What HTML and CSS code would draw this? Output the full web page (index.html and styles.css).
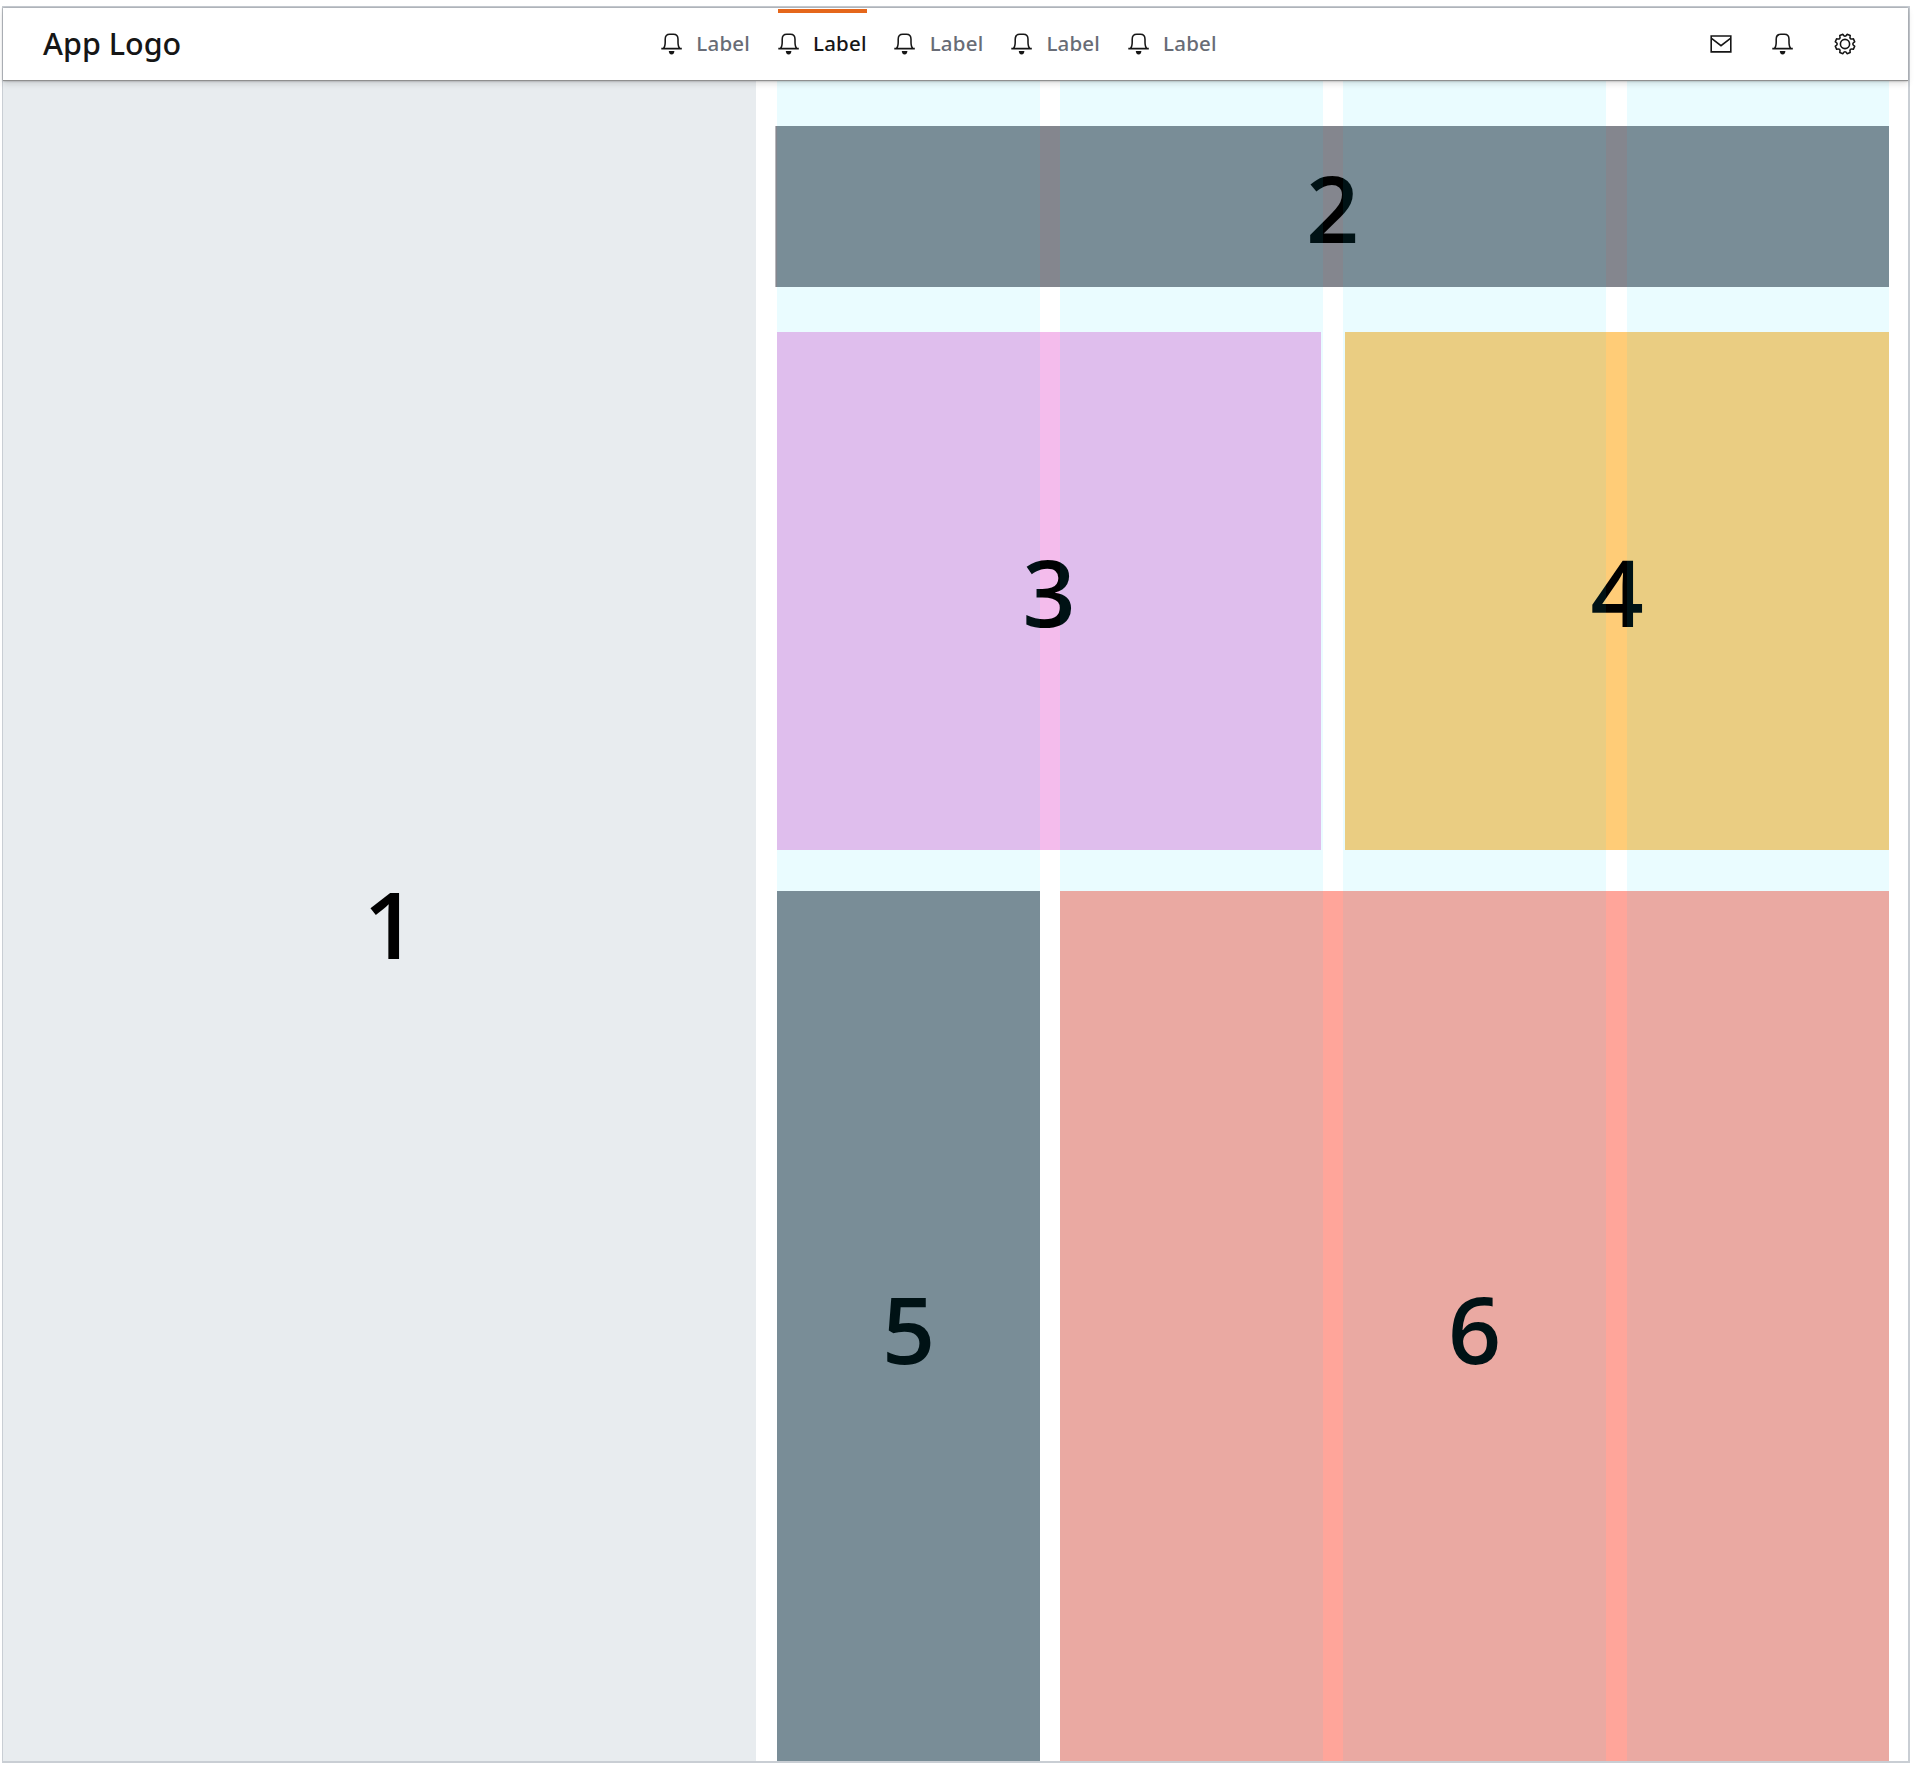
FILE: index.html
```html
<!DOCTYPE html>
<html lang="en">
<head>
<meta charset="utf-8">
<title>App layout</title>
<link rel="stylesheet" href="styles.css">
</head>
<body>
<svg class="sprite" aria-hidden="true">
  <symbol id="bell" viewBox="0 0 22 22">
    <path d="M.3 15.6H20.8M2.5 15.3C3.9 14 4.2 12.2 4.2 9V6.2C4.2 2.8 5.8 1.3 8.8 1.3H12.4C15.4 1.3 17 2.8 17 6.2V9C17 12.2 17.3 14 18.7 15.3" fill="none" stroke="currentColor" stroke-width="1.55"/>
    <path d="M7.8 18H13.4C13.4 20 12.4 21.4 10.6 21.4S7.8 20 7.8 18Z" fill="currentColor"/>
  </symbol>
  <symbol id="mail" viewBox="0 0 22 22">
    <path d="M1.2 3H20.8V18.9H1.2ZM1.2 5.2L11 12.7L20.8 5.2" fill="none" stroke="currentColor" stroke-width="1.6"/>
  </symbol>
  <symbol id="gear" viewBox="0 0 22 22">
    <g fill="none" stroke="currentColor" stroke-width="1.6" stroke-linejoin="round">
      <circle cx="11" cy="11" r="4.6"/>
      <path d="M13.1 1.3L16.2 2.6Q15 7 19.4 5.8L20.7 8.9Q16.9 11 20.7 13.1L19.4 16.2Q15 15 16.2 19.4L13.1 20.7Q11 16.9 8.9 20.7L5.8 19.4Q7 15 2.6 16.2L1.3 13.1Q5.1 11 1.3 8.9L2.6 5.8Q7 7 5.8 2.6L8.9 1.3Q11 5.1 13.1 1.3Z"/>
    </g>
  </symbol>
</svg>
<div class="frame">
  <header class="topbar">
    <div class="logo">App Logo</div>
    <nav class="tabs">
      <a class="tab"><svg class="icon"><use href="#bell"/></svg><span>Label</span></a>
      <a class="tab active"><svg class="icon"><use href="#bell"/></svg><span>Label</span></a>
      <a class="tab"><svg class="icon"><use href="#bell"/></svg><span>Label</span></a>
      <a class="tab"><svg class="icon"><use href="#bell"/></svg><span>Label</span></a>
      <a class="tab"><svg class="icon"><use href="#bell"/></svg><span>Label</span></a>
    </nav>
    <div class="actions">
      <svg class="icon"><use href="#mail"/></svg>
      <svg class="icon"><use href="#bell"/></svg>
      <svg class="icon"><use href="#gear"/></svg>
    </div>
  </header>
  <div class="body">
    <aside class="panel side"><span>1</span></aside>
    <main class="content">
      <section class="panel hero"><span>2</span></section>
      <div class="row halves">
        <section class="panel pink"><span>3</span></section>
        <section class="panel amber"><span>4</span></section>
      </div>
      <div class="row split">
        <section class="panel slate"><span>5</span></section>
        <section class="panel coral"><span>6</span></section>
      </div>
      <div class="columns"><i></i><i></i><i></i><i></i></div>
    </main>
  </div>
</div>
</body>
</html>
```
FILE: styles.css
```css
* { box-sizing: border-box; }
body {
  margin: 0;
  padding: 6px 4px 8px 2px;
  height: 1771px;
  background: #fff;
  font-family: "Noto Sans", "Open Sans", sans-serif;
}
.sprite { display: none; }
.frame {
  height: 1757px;
  border: 2px solid #c9ced4;
  border-left-width: 1px;
  display: flex;
  flex-direction: column;
}
.topbar {
  position: relative;
  z-index: 2;
  flex: none;
  height: 73px;
  display: grid;
  grid-template-columns: 658px 1fr auto;
  background: #fff;
  border-bottom: 1px solid #8f8f8f;
  box-shadow: 0 0 2px rgba(0,0,0,.35), 0 3px 6px rgba(0,0,0,.12);
  color: #161616;
}
.logo {
  padding-left: 40px;
  font-size: 30.5px;
  font-weight: 500;
  line-height: 71px;
}
.tabs { display: flex; gap: 27.7px; }
.tab {
  width: 89px;
  display: flex;
  align-items: center;
  justify-content: space-between;
  border-top: 4px solid transparent;
  margin-top: 1px;
  padding-bottom: 5px;
  font-size: 20.5px;
  font-weight: 500;
  letter-spacing: .2px;
  color: #686c76;
}
.tab span { padding-bottom: 2px; }
.tab.active { border-color: #e5671b; color: #161616; }
.icon { width: 22px; height: 22px; display: block; color: #161616; }
.actions { display: flex; gap: 40px; padding: 25px 52px 0 0; }
.body { flex: 1; display: flex; min-height: 0; }
.panel {
  display: flex;
  align-items: center;
  justify-content: center;
  padding-top: 1px;
  font-family: "Open Sans", "Noto Sans", sans-serif;
  font-size: 93px;
  font-weight: 600;
  line-height: 1;
  color: #000;
}
.side { width: 753px; padding: 4px 0 0 21px; background: #e8ecef; }
.content {
  position: relative;
  flex: 1;
  margin: 0 19px 0 21px;
  display: flex;
  flex-direction: column;
}
.hero { height: 161px; margin: 45px 0 45px -2px; padding-top: 2px; border-left: 1px solid #b5b6ba; background: #84868e; flex: none; }
.row { display: grid; }
.halves { height: 518px; grid-template-columns: 544px 544px; gap: 24px; flex: none; }
.split { flex: 1; margin-top: 41px; grid-template-columns: 263px 1fr; gap: 20px; }
.split .panel { padding-top: 4px; }
.pink { background: #f4bcec; }
.amber { background: #ffcc77; }
.slate { background: #84868e; }
.coral { background: #ffa59a; }
/* column guides tint everything underneath */
.columns {
  position: absolute;
  inset: 0;
  display: grid;
  grid-template-columns: 263px 263px 263px 262px;
  justify-content: start;
  gap: 20px;
}
.columns i { background: rgba(0, 218, 255, .081); }
.columns i:last-child { position: relative; left: 1px; }
```
